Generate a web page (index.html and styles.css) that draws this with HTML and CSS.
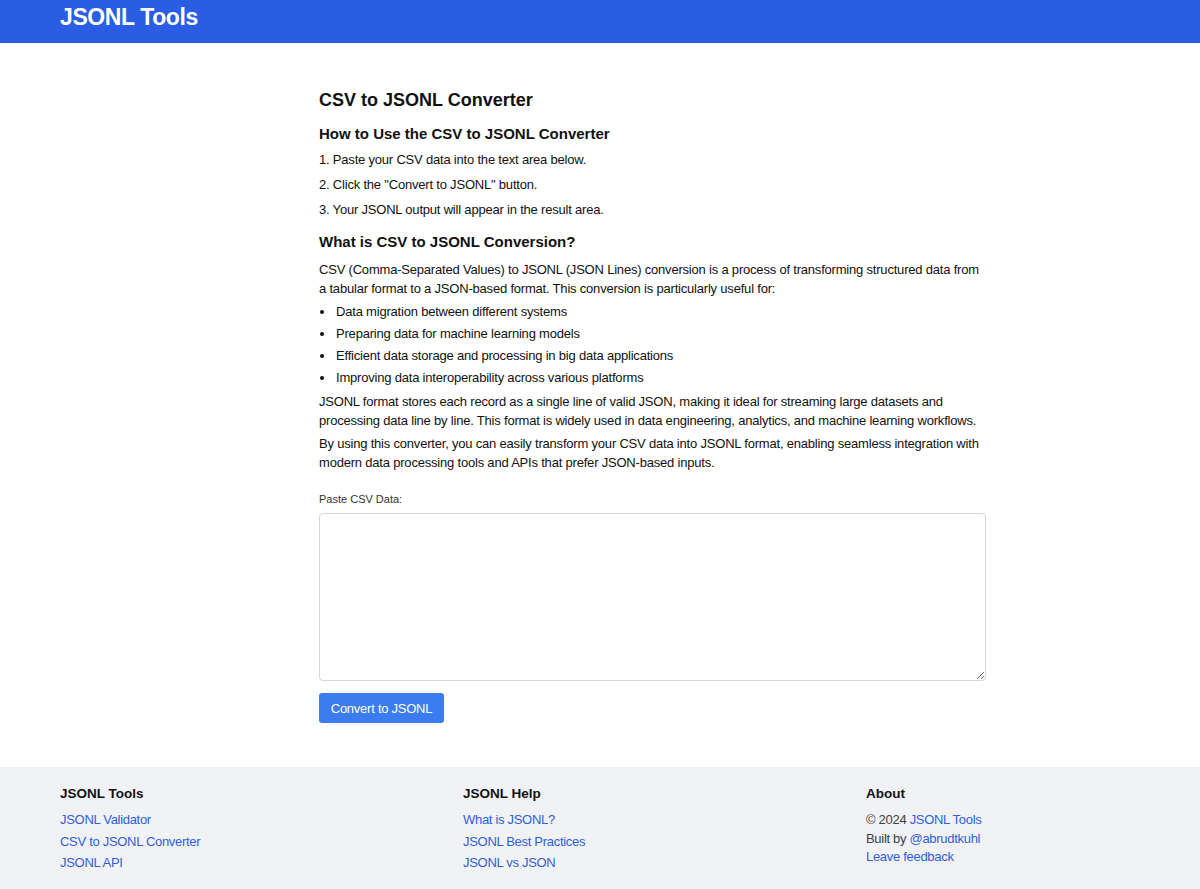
FILE: index.html
```html
<!DOCTYPE html>
<html lang="en">
<head>
    <meta charset="UTF-8">
    <meta name="viewport" content="width=device-width, initial-scale=1.0">
    <title>CSV to JSONL Converter - JSONL Tools</title>
    <link rel="stylesheet" href="styles.css">
</head>
<body>
    <header class="site-header">
        <a class="brand" href="#">JSONL Tools</a>
    </header>

    <main class="content">
        <h1>CSV to JSONL Converter</h1>

        <h2>How to Use the CSV to JSONL Converter</h2>
        <ol class="steps">
            <li>1. Paste your CSV data into the text area below.</li>
            <li>2. Click the "Convert to JSONL" button.</li>
            <li>3. Your JSONL output will appear in the result area.</li>
        </ol>

        <h2>What is CSV to JSONL Conversion?</h2>
        <p>CSV (Comma-Separated Values) to JSONL (JSON Lines) conversion is a process of transforming structured data from a tabular format to a JSON-based format. This conversion is particularly useful for:</p>
        <ul class="uses">
            <li>Data migration between different systems</li>
            <li>Preparing data for machine learning models</li>
            <li>Efficient data storage and processing in big data applications</li>
            <li>Improving data interoperability across various platforms</li>
        </ul>
        <p>JSONL format stores each record as a single line of valid JSON, making it ideal for streaming large datasets and processing data line by line. This format is widely used in data engineering, analytics, and machine learning workflows.</p>
        <p>By using this converter, you can easily transform your CSV data into JSONL format, enabling seamless integration with modern data processing tools and APIs that prefer JSON-based inputs.</p>

        <form class="converter" onsubmit="return false">
            <label for="csv-input">Paste CSV Data:</label>
            <textarea id="csv-input"></textarea>
            <button type="submit">Convert to JSONL</button>
        </form>
    </main>

    <footer class="site-footer">
        <div class="footer-col">
            <h3>JSONL Tools</h3>
            <ul class="footer-links">
                <li><a href="#">JSONL Validator</a></li>
                <li><a href="#">CSV to JSONL Converter</a></li>
                <li><a href="#">JSONL API</a></li>
            </ul>
        </div>
        <div class="footer-col">
            <h3>JSONL Help</h3>
            <ul class="footer-links">
                <li><a href="#">What is JSONL?</a></li>
                <li><a href="#">JSONL Best Practices</a></li>
                <li><a href="#">JSONL vs JSON</a></li>
            </ul>
        </div>
        <div class="footer-col">
            <h3>About</h3>
            <div class="about">
                <p>© 2024 <a href="#">JSONL Tools</a></p>
                <p>Built by <a href="#">@abrudtkuhl</a></p>
                <p><a href="#">Leave feedback</a></p>
            </div>
        </div>
    </footer>
</body>
</html>
```

FILE: styles.css
```css
* {
    margin: 0;
    padding: 0;
    box-sizing: border-box;
}

body {
    font-family: 'Liberation Sans', Arial, sans-serif;
    color: #111;
    background-color: #ffffff;
}

a {
    color: #2f5fd8;
    text-decoration: none;
}

.site-header {
    height: 43px;
    padding: 0 60px;
    background-color: #2a5de3;
}

.brand {
    display: block;
    font-size: 23px;
    font-weight: 700;
    line-height: 35px;
    color: #ffffff;
    letter-spacing: -0.4px;
}

.content {
    width: 667px;
    margin-left: 319px;
    padding: 43px 0 44px;
}

h1 {
    font-size: 18px;
    line-height: 28px;
    margin-bottom: 6px;
}

h2 {
    font-size: 15px;
    line-height: 28px;
    margin-bottom: 2px;
}

.steps,
.uses,
p {
    font-size: 13px;
    letter-spacing: -0.2px;
}

.steps,
.uses {
    list-style: none;
}

.steps li {
    line-height: 20px;
    margin-bottom: 5px;
}

.steps {
    margin-bottom: 8px;
}

p {
    line-height: 19px;
    margin-bottom: 4px;
}

h2 + p {
    margin-top: 4px;
}

p + p {
    margin-top: 1px;
}

.uses {
    margin-bottom: 5px;
}

.uses li {
    position: relative;
    line-height: 19px;
    margin-bottom: 3px;
    padding-left: 17px;
}

.uses li::before {
    content: "";
    position: absolute;
    left: 1px;
    top: 8px;
    width: 4px;
    height: 4px;
    border-radius: 50%;
    background-color: #111;
}

.converter {
    display: flex;
    flex-direction: column;
    align-items: flex-start;
    margin-top: 19px;
}

.converter label {
    font-size: 11px;
    line-height: 16px;
    color: #333;
    margin-bottom: 6px;
}

.converter textarea {
    width: 100%;
    height: 168px;
    border: 1px solid #d4d6da;
    border-radius: 4px;
    padding: 8px;
    font-family: 'Liberation Mono', monospace;
    font-size: 13px;
    resize: vertical;
    margin-bottom: 12px;
}

.converter button {
    height: 30px;
    width: 125px;
    background-color: #3b7cf0;
    color: #ffffff;
    border: none;
    border-radius: 3px;
    font-family: inherit;
    font-size: 13px;
    letter-spacing: -0.25px;
    cursor: pointer;
}

.site-footer {
    display: grid;
    grid-template-columns: 403px 403px 1fr;
    padding: 17px 60px 20px;
    background-color: #f1f2f5;
}

.site-footer h3 {
    font-size: 13.5px;
    line-height: 20px;
    margin-bottom: 5px;
}

.footer-links {
    list-style: none;
    font-size: 13px;
    letter-spacing: -0.3px;
}

.footer-links li {
    line-height: 21.5px;
}

.about {
    padding-top: 2px;
}

.about p {
    line-height: 18.5px;
    letter-spacing: -0.3px;
    margin: 0;
    color: #3a3f47;
}
```
